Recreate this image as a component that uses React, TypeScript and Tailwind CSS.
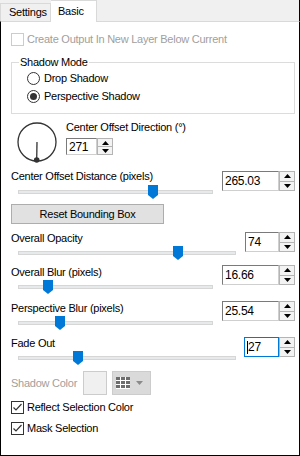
import React from 'react';

const Tri = ({ up }: { up?: boolean }) => (
  <svg width="7" height="4" viewBox="0 0 7 4">
    <polygon points={up ? '3.5,0 7,4 0,4' : '0,0 7,0 3.5,4'} fill="#000" />
  </svg>
);

const Spin = ({
  value,
  boxW,
  h = 'h-[20px]',
  focused = false,
}: {
  value: string;
  boxW: string;
  h?: string;
  focused?: boolean;
}) => (
  <div className={`flex ${h}`}>
    <div
      className={`${boxW} h-full bg-white flex items-center pl-[2px] text-[12px] text-black border ${
        focused
          ? 'border-[#0078d7]'
          : 'border-t-[#7a7a7a] border-l-[#7a7a7a] border-r-[#cfcfcf] border-b-[#cfcfcf]'
      }`}
    >
      {focused && <span className="w-px h-[13px] bg-black" />}
      {value}
    </div>
    <div className="w-[16px] h-full flex flex-col border border-[#b4b4b4] bg-[#f3f3f3]">
      <div className="flex-1 flex items-center justify-center border-b border-[#b4b4b4]">
        <Tri up />
      </div>
      <div className="flex-1 flex items-center justify-center">
        <Tri />
      </div>
    </div>
  </div>
);

const Slider = ({ trackW, thumbX }: { trackW: string; thumbX: number }) => (
  <div className={`relative h-[14px] ml-[7px] ${trackW}`}>
    <div className="absolute left-0 right-0 top-[5px] h-[4px] bg-[#e7eaea] border border-[#d6d6d6]" />
    <svg className="absolute top-0" style={{ left: thumbX }} width="10" height="14" viewBox="0 0 10 14">
      <polygon points="0,0 10,0 10,10 5,14 0,10" fill="#0078d7" />
    </svg>
  </div>
);

const SliderRow = ({
  label,
  value,
  trackW,
  thumbX,
  boxW,
  mt,
  spinMt,
  focused,
}: {
  label: string;
  value: string;
  trackW: string;
  thumbX: number;
  boxW: string;
  mt: string;
  spinMt: string;
  focused?: boolean;
}) => (
  <div className={`flex justify-between items-start ${mt}`}>
    <div className="flex flex-col">
      <div className="h-[14px] leading-[14px]">{label}</div>
      <div className="mt-px">
        <Slider trackW={trackW} thumbX={thumbX} />
      </div>
    </div>
    <div className={spinMt}>
      <Spin value={value} boxW={boxW} focused={focused} />
    </div>
  </div>
);

const Check = ({ checked, disabled }: { checked?: boolean; disabled?: boolean }) => (
  <div
    className={`w-[13px] h-[13px] bg-white border flex items-center justify-center ${
      disabled ? 'border-[#cccccc]' : 'border-[#333333]'
    }`}
  >
    {checked && (
      <svg width="11" height="11" viewBox="0 0 11 11">
        <polyline points="1.5,5.5 4,8 9.5,2" fill="none" stroke="#333" strokeWidth="1.2" />
      </svg>
    )}
  </div>
);

const Radio = ({ checked }: { checked?: boolean }) => (
  <div className="w-[13px] h-[13px] rounded-full border border-[#333333] bg-white flex items-center justify-center">
    {checked && <div className="w-[7px] h-[7px] rounded-full bg-[#333333]" />}
  </div>
);

export default function App() {
  return (
    <div className="w-[300px] h-[456px] flex flex-col bg-[#f0f0f0] text-[11px] tracking-[-0.25px] text-black font-['Liberation_Sans',Arial,sans-serif]">
      {/* Tabs */}
      <div className="h-[21px] flex items-end border-r border-black">
        <div className="w-[51px] h-[18px] border border-b-0 border-[#d9d9d9] bg-[#f0f0f0] pl-[8px] leading-[16px]">
          Settings
        </div>
        <div className="relative z-10 -mb-px w-[46px] h-[22px] border border-b-0 border-l-0 border-[#d9d9d9] bg-white pl-[7px] pt-[3px] leading-[14px]">
          Basic
        </div>
      </div>

      {/* Panel */}
      <div className="flex-1 flex flex-col bg-white border border-black border-t-[#d9d9d9] pl-[10px] pr-[4px]">
        <div className="mt-[10px] h-[14px] flex items-center gap-[3px] text-[#a0a0a0]">
          <Check disabled />
          <span>Create Output In New Layer Below Current</span>
        </div>

        <div className="relative mt-[16px] h-[52px] border border-[#dcdcdc] flex flex-col">
          <span className="absolute left-[7px] -top-[8px] bg-white px-px leading-[14px]">Shadow Mode</span>
          <div className="mt-[8px] ml-[15px] h-[14px] flex items-center gap-[4px]">
            <Radio />
            <span>Drop Shadow</span>
          </div>
          <div className="mt-[4px] ml-[15px] h-[14px] flex items-center gap-[4px]">
            <Radio checked />
            <span>Perspective Shadow</span>
          </div>
        </div>

        <div className="mt-[6px] h-[46px] flex items-start">
          <svg className="ml-[5px] mt-px" width="42" height="42" viewBox="0 0 42 42">
            <circle cx="21" cy="21" r="19" fill="none" stroke="#333" strokeWidth="1.3" />
            <line x1="21" y1="21" x2="20.7" y2="39" stroke="#333" strokeWidth="1.3" />
            <circle cx="20.7" cy="39" r="2.8" fill="#333" />
          </svg>
          <div className="ml-[8px] flex flex-col">
            <div className="h-[14px] leading-[14px]">Center Offset Direction (°)</div>
            <div className="mt-[4px]">
              <Spin value="271" boxW="w-[31px]" h="h-[17px]" />
            </div>
          </div>
        </div>

        <div className="mt-[3px] flex justify-between items-start">
          <div className="flex flex-col">
            <div className="h-[14px] leading-[14px]">Center Offset Distance (pixels)</div>
            <div className="mt-[2px]">
              <Slider trackW="w-[195px]" thumbX={130} />
            </div>
          </div>
          <div className="mt-[2px]">
            <Spin value="265.03" boxW="w-[57px]" />
          </div>
        </div>

        <button className="mt-[5px] w-[153px] h-[20px] bg-[#e1e1e1] border border-[#adadad] flex items-center justify-center">
          Reset Bounding Box
        </button>

        <SliderRow label="Overall Opacity" value="74" trackW="w-[218px]" thumbX={155} boxW="w-[34px]" mt="mt-[7px]" spinMt="mt-px" />
        <SliderRow label="Overall Blur (pixels)" value="16.66" trackW="w-[195px]" thumbX={25} boxW="w-[57px]" mt="mt-[5px]" spinMt="mt-0" />
        <SliderRow label="Perspective Blur (pixels)" value="25.54" trackW="w-[195px]" thumbX={37} boxW="w-[57px]" mt="mt-[7px]" spinMt="mt-0" />
        <SliderRow label="Fade Out" value="27" trackW="w-[218px]" thumbX={55} boxW="w-[35px]" mt="mt-[6px]" spinMt="mt-px" focused />

        <div className="mt-[6px] h-[24px] flex items-center">
          <span className="w-[72px] text-[#a0a0a0]">Shadow Color</span>
          <div className="w-[24px] h-[24px] bg-[#f0f0f0] border border-[#cccccc]" />
          <div className="ml-[5px] w-[39px] h-[24px] bg-[#dadada] border border-[#cccccc] flex items-center pl-[3px] gap-[6px]">
            <svg width="14" height="12" viewBox="0 0 14 12">
              <rect x="0" y="0" width="14" height="12" fill="#ffffff" />
              {[0, 1, 2].map((r) =>
                [0, 1, 2].map((c) => (
                  <rect key={`${r}-${c}`} x={c * 5} y={r * 4} width="4" height="3" fill="#6d6d6d" />
                ))
              )}
            </svg>
            <svg width="7" height="4" viewBox="0 0 7 4">
              <polygon points="0,0 7,0 3.5,4" fill="#8a8a8a" />
            </svg>
          </div>
        </div>

        <div className="mt-[5px] h-[14px] flex items-center gap-[3px]">
          <Check checked />
          <span>Reflect Selection Color</span>
        </div>
        <div className="mt-[7px] h-[14px] flex items-center gap-[3px]">
          <Check checked />
          <span>Mask Selection</span>
        </div>
      </div>
    </div>
  );
}
